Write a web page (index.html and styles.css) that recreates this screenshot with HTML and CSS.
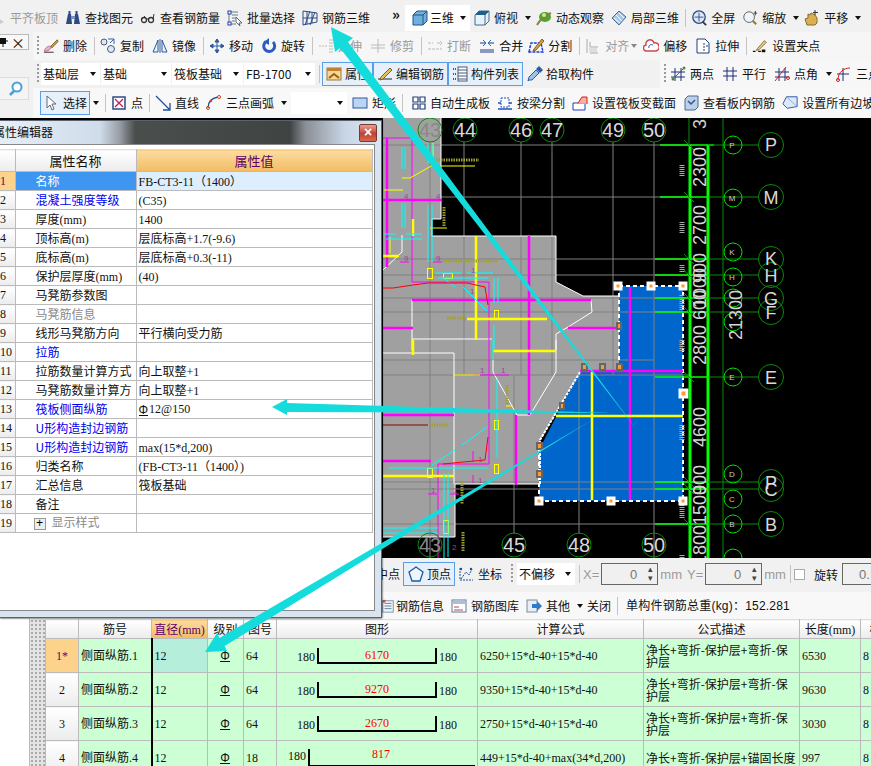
FILE: index.html
```html
<!DOCTYPE html>
<html lang="zh-CN">
<head>
<meta charset="utf-8">
<title>属性编辑器</title>
<link rel="stylesheet" href="styles.css">
</head>
<body>
<svg class="sprite" width="0" height="0">
<defs>
<symbol id="i-plate" viewBox="0 0 16 16"><path d="M2 12 8 8 14 12 8 15Z" fill="#ccc"/><path d="M8 1V7M6 5 8 8 10 5" stroke="#aaa" fill="none"/></symbol>
<symbol id="i-find" viewBox="0 0 16 16"><path d="M1 14 3 4H6L7 14ZM9 14 10 4H13L15 14Z" fill="#2c4a86"/><rect x="3.500" y="1" width="2" height="3" fill="#2c4a86"/><rect x="10.500" y="1" width="2" height="3" fill="#2c4a86"/><rect x="6" y="6" width="4" height="3" fill="#7d93bd"/></symbol>
<symbol id="i-glass" viewBox="0 0 16 16"><circle cx="4" cy="10" r="2.500" fill="none" stroke="#333" stroke-width="1.300"/><circle cx="11" cy="10" r="2.500" fill="none" stroke="#333" stroke-width="1.300"/><path d="M6 9 9 9M13 9 14 4 M2 9 5 6" stroke="#333" fill="none"/></symbol>
<symbol id="i-batch" viewBox="0 0 16 16"><path d="M2 2H11M2 2V14H9M5 5H11M5 8H9M5 11H8" stroke="#6a7894" fill="none"/><rect x="1" y="12" width="3" height="3" fill="#fff" stroke="#1f3fa0"/><rect x="1" y="1" width="3" height="3" fill="#fff" stroke="#1f3fa0"/><path d="M9 7 15 13 12 13 13 16 9 12Z" fill="#fff" stroke="#667"/></symbol>
<symbol id="i-grid3d" viewBox="0 0 16 16"><path d="M1 1V15L15 12V3ZM5 2V14M10 2.500V13M1 8H15M3 15 8 1M8 15 13 2" stroke="#2c4a86" fill="none"/></symbol>
<symbol id="i-cube" viewBox="0 0 16 16"><path d="M1 5 5 1H15V11L11 15H1Z" fill="#6fb0e0" stroke="#29527a"/><path d="M1 5H11V15M11 5 15 1" fill="none" stroke="#29527a"/></symbol>
<symbol id="i-cube2" viewBox="0 0 16 16"><path d="M1 5 5 1H15V11L11 15H1Z" fill="#e6f2fa" stroke="#3e6d93"/><path d="M1 5 5 1H15L11 5Z" fill="#1f5f8f"/><path d="M11 5V15M11 5 15 1" fill="none" stroke="#3e6d93"/></symbol>
<symbol id="i-orbit" viewBox="0 0 16 16"><ellipse cx="9" cy="7" rx="6" ry="5" fill="#5aa02c"/><path d="M1 15C3 11 9 5 15 3" stroke="#7a8a3a" stroke-width="2" fill="none"/><circle cx="8" cy="5" r="2" fill="#cfe89a"/></symbol>
<symbol id="i-partial" viewBox="0 0 16 16"><path d="M1 8 8 1 15 7 8 15Z" fill="#a8c8e8" stroke="#4a6a90"/><path d="M5 5 11 11M8 3 13 8M3 8 9 13" stroke="#fff"/></symbol>
<symbol id="i-fit" viewBox="0 0 18 18"><circle cx="9" cy="8" r="7" fill="#dce8f5" stroke="#2c4a86" stroke-width="1.500"/><path d="M9 3V13M4 8H14" stroke="#2c4a86"/><path d="M13 13 17 17" stroke="#334" stroke-width="2"/></symbol>
<symbol id="i-zoom" viewBox="0 0 18 18"><circle cx="8" cy="8" r="6" fill="#eef4fa" stroke="#555"/><path d="M12 12 16 16" stroke="#a08030" stroke-width="2.500"/><path d="M15 1V6M13 3.500H17" stroke="#333"/></symbol>
<symbol id="i-pan" viewBox="0 0 16 16"><path d="M3 15 1 9 4 8V4L6 5 7 3 9 4 11 5 13 8V13L11 15Z" fill="#dcb050" stroke="#8a6a20"/><path d="M11 0V5M9 2.500H14" stroke="#333"/></symbol>
<symbol id="i-del" viewBox="0 0 18 16"><path d="M1 15H12" stroke="#222"/><path d="M2 12C4 9 7 7 9 9 9 12 5 14 2 14Z" fill="#f0b0c8" stroke="#b06080"/><path d="M9 8 16 1 17 3 10 10Z" fill="#c9a040" stroke="#806020"/></symbol>
<symbol id="i-copy" viewBox="0 0 16 16"><circle cx="4" cy="4" r="3" fill="#dde8f0" stroke="#4a5a78"/><circle cx="11" cy="11" r="3.500" fill="#dde8f0" stroke="#4a5a78"/><path d="M8 1 14 1M14 1V6M14 1 10 5" stroke="#3a62a8" fill="none"/></symbol>
<symbol id="i-mirror" viewBox="0 0 16 16"><path d="M1 14 6 2V14ZM15 14 10 2V14Z" fill="#e8f0fa" stroke="#2c5aa0"/><path d="M8 1V15" stroke="#2c5aa0"/></symbol>
<symbol id="i-move" viewBox="0 0 16 16"><path d="M8 1V15M1 8H15M8 1 6 4H10ZM8 15 6 12H10ZM1 8 4 6V10ZM15 8 12 6V10Z" fill="#2c5aa0" stroke="#2c5aa0"/></symbol>
<symbol id="i-rotate" viewBox="0 0 16 16"><path d="M12 4A5.500 5.500 0 1 1 5 3.500" fill="none" stroke="#2c5ac0" stroke-width="3"/><path d="M8 0 3 4 8 7Z" fill="#2c5ac0"/></symbol>
<symbol id="i-extend" viewBox="0 0 16 16"><path d="M1 8H9M12 1V15M14 1V15" stroke="#bbb" stroke-dasharray="2 1" fill="none"/></symbol>
<symbol id="i-trim" viewBox="0 0 16 16"><path d="M8 1V15M1 7H15M1 10H15" stroke="#bbb" fill="none"/></symbol>
<symbol id="i-break" viewBox="0 0 16 16"><path d="M1 5H6M10 5H15M1 11H15" stroke="#bbb" stroke-dasharray="3 1" fill="none"/><path d="M13 3 15 5 13 7" stroke="#bbb" fill="none"/></symbol>
<symbol id="i-merge" viewBox="0 0 16 16"><path d="M1 12H15M1 14H15M1 5H6M10 5H15" stroke="#1f3f88" fill="none"/><path d="M4 2 7 5 4 8M12 2 9 5 12 8" stroke="#2c6ac0" fill="none"/></symbol>
<symbol id="i-split" viewBox="0 0 16 16"><path d="M1 14 3 5H13L15 14Z" fill="none" stroke="#1f3fd0" stroke-width="1.500" stroke-dasharray="3 1"/><path d="M6 11 14 1 16 3 8 12 5 13Z" fill="#d8a040" stroke="#806020"/></symbol>
<symbol id="i-align" viewBox="0 0 16 16"><path d="M2 1V15M5 15H13M5 9H13M5 9V4" stroke="#aaa" fill="none"/><rect x="4" y="10" width="8" height="4" fill="#ddd"/></symbol>
<symbol id="i-offset" viewBox="0 0 16 16"><path d="M4 13A3 3 0 0 1 3 7 4 4 0 0 1 11 5 4 4 0 0 1 13 13Z" fill="#fff" stroke="#d04a4a" stroke-width="1.500"/><path d="M6 10A2 2 0 0 1 6 8 3 3 0 0 1 10 7" stroke="#3060c0" fill="none"/></symbol>
<symbol id="i-stretch" viewBox="0 0 16 16"><path d="M2 1H10L14 5V15H2Z" fill="#fff" stroke="#1f3f78"/><path d="M9 5V14M11 8H14" stroke="#1f3f78" stroke-dasharray="2 1"/></symbol>
<symbol id="i-grippt" viewBox="0 0 18 16"><path d="M1 14H4M7 14H10" stroke="#111" stroke-width="1.500"/><rect x="11" y="12" width="4" height="3" fill="#111"/><path d="M6 11 14 2 16 4 8 12 5 13Z" fill="#e8d090" stroke="#806020"/></symbol>
<symbol id="i-prop" viewBox="0 0 16 16"><rect x="1" y="2" width="14" height="12" fill="#f4d890" stroke="#a07830"/><rect x="1" y="2" width="14" height="3" fill="#c08030"/><path d="M3 12 8 8 13 12" stroke="#a05a20" stroke-width="2" fill="none"/></symbol>
<symbol id="i-edit" viewBox="0 0 16 16"><path d="M1 13H15" stroke="#222"/><path d="M4 11 13 2 15 4 6 13 3 14Z" fill="#e8c060" stroke="#806020"/></symbol>
<symbol id="i-list" viewBox="0 0 16 16"><path d="M1 3H4M1 8H4M1 13H4" stroke="#555" stroke-width="2" stroke-dasharray="1 1"/><rect x="6" y="1" width="9" height="14" fill="#fff" stroke="#4a5a78"/><path d="M6 4H15M6 7H15M6 10H15M6 13H15" stroke="#4a5a78"/></symbol>
<symbol id="i-pick" viewBox="0 0 16 16"><path d="M2 14 1 15 2 11 9 4 12 7 5 14Z" fill="#9cc4ea" stroke="#2c5aa0"/><path d="M9 3 12 0 16 4 13 7Z" fill="#2c5aa0"/></symbol>
<symbol id="i-two" viewBox="0 0 16 16"><path d="M5 2V15M11 2V15M1 6H15M1 11H15" stroke="#1f2f78" fill="none"/><path d="M2 14 15 1" stroke="#c03030"/><circle cx="3" cy="13" r="1.500" fill="#4a8a2a"/><circle cx="14" cy="2" r="1.500" fill="#4a8a2a"/></symbol>
<symbol id="i-par" viewBox="0 0 16 16"><path d="M5 1V15M11 1V15M1 5H15M1 10H15" stroke="#1f2f78" fill="none"/></symbol>
<symbol id="i-ang" viewBox="0 0 16 16"><path d="M5 2V15M11 2V15M1 6H15M1 11H15" stroke="#1f2f78" fill="none"/><path d="M1 15 12 1" stroke="#d02020"/><circle cx="14" cy="12" r="1.500" fill="none" stroke="#d02020"/></symbol>
<symbol id="i-arc3v" viewBox="0 0 16 16"><path d="M7 2V15M1 8H13" stroke="#1f2f78" fill="none"/><path d="M2 14C2 6 8 2 14 2" stroke="#d02020" fill="none"/><circle cx="2" cy="14" r="1.500" fill="none" stroke="#d02020"/></symbol>
<symbol id="i-arrow" viewBox="0 0 16 16"><path d="M3 1V13L6 10 8 15 10 14 8 9H12Z" fill="#fff" stroke="#667"/></symbol>
<symbol id="i-point" viewBox="0 0 16 16"><rect x="2" y="2" width="12" height="12" fill="#fff" stroke="#2c4a86" stroke-width="1.500"/><path d="M4 4 12 12M12 4 4 12" stroke="#c02050" stroke-width="1.300"/></symbol>
<symbol id="i-line" viewBox="0 0 16 16"><path d="M1 1 15 15M15 8V15H8" stroke="#1f4f98" fill="none" stroke-width="1.300"/></symbol>
<symbol id="i-arc" viewBox="0 0 16 16"><path d="M2 13C2 7 6 3 12 2" stroke="#1f4f98" fill="none" stroke-width="1.300"/><circle cx="2" cy="13" r="1.500" fill="none" stroke="#d04020"/><circle cx="13" cy="2" r="1.500" fill="none" stroke="#d04020"/><circle cx="5" cy="6" r="1.200" fill="#d04020"/></symbol>
<symbol id="i-rect" viewBox="0 0 16 16"><rect x="1" y="3" width="14" height="10" fill="#bcd4f4" stroke="#2c5aa0"/></symbol>
<symbol id="i-auto" viewBox="0 0 16 16"><path d="M2 2H7V7H2ZM9 2H14V7H9ZM2 9H7V14H2ZM9 9H14V14H9Z" fill="#fff" stroke="#1f3f78" stroke-width="1.200"/></symbol>
<symbol id="i-beam" viewBox="0 0 16 16"><path d="M1 8H15M1 14H15" stroke="#1f4fc0" stroke-width="1.300"/><rect x="4" y="3" width="8" height="9" fill="#fff" stroke="#1f4fc0" stroke-dasharray="2 1"/></symbol>
<symbol id="i-var" viewBox="0 0 16 16"><path d="M1 8H13V15H1Z" fill="#fff" stroke="#1f3fc0"/><path d="M6 8 10 2H15V9" fill="#f4b0a0" stroke="#d02020"/></symbol>
<symbol id="i-view" viewBox="0 0 16 16"><path d="M2 4 5 1H15V12L12 15H2Z" fill="#bcd0e8" stroke="#4a6a90"/><path d="M5 6 8 9 12 5" stroke="#2c5a90" stroke-width="1.500" fill="none"/></symbol>
<symbol id="i-slope" viewBox="0 0 18 16"><path d="M1 9 5 1H17V12L6 14Z" fill="#dce8f8" stroke="#1f4fa0"/><path d="M6 2 16 11" stroke="#6a8ac0" stroke-dasharray="2 1"/></symbol>
<symbol id="i-vertex" viewBox="0 0 16 16"><path d="M8 1 15 6 12 15H4L1 6Z" fill="#eef6fc" stroke="#1f5aa0" stroke-width="1.300"/></symbol>
<symbol id="i-coord" viewBox="0 0 16 16"><path d="M2 2V14H15M3 13 8 6 11 9 14 3" stroke="#1f4f98" fill="none" stroke-dasharray="2 1"/><circle cx="3" cy="3" r="1.200" fill="#1f4f98"/><circle cx="13" cy="3" r="1.200" fill="#1f4f98"/></symbol>
<symbol id="i-lib" viewBox="0 0 16 16"><rect x="1" y="2" width="14" height="12" fill="#fff" stroke="#5a7a9a"/><rect x="2" y="3" width="12" height="3" fill="#a8c0dc"/><path d="M3 9H8M3 12H12" stroke="#b05050"/></symbol>
<symbol id="i-info" viewBox="0 0 16 16"><rect x="2" y="2" width="12" height="13" fill="#eef4fa" stroke="#6a8aa8"/><path d="M4 5H12M4 8H12M4 11H12" stroke="#5a7a9a"/><rect x="2" y="1" width="3" height="3" fill="#c05040"/></symbol>
<symbol id="i-other" viewBox="0 0 16 16"><rect x="1" y="2" width="10" height="12" fill="#e8eef6" stroke="#7a8aa0"/><path d="M6 6H11V3L16 8 11 13V10H6Z" fill="#2c7ad0"/></symbol>
<symbol id="i-search" viewBox="0 0 16 16"><circle cx="9" cy="6" r="4.500" fill="#fff" stroke="#4aa0d8" stroke-width="2"/><path d="M6 10 2 14" stroke="#4aa0d8" stroke-width="2.500"/></symbol>
<symbol id="i-pin" viewBox="0 0 8 10"><path d="M0 1H6V7H0Z" fill="#111"/><path d="M6 4H8" stroke="#111"/><path d="M3 7V10" stroke="#111"/></symbol>
</defs>
</svg>

<div class="app">
  <div class="row top">
    <span class="tool off first"><svg class="ic"><use href="#i-plate"/></svg>平齐板顶</span>
    <span class="tool"><svg class="ic"><use href="#i-find"/></svg>查找图元</span>
    <span class="tool"><svg class="ic"><use href="#i-glass"/></svg>查看钢筋量</span>
    <span class="tool"><svg class="ic"><use href="#i-batch"/></svg>批量选择</span>
    <span class="tool"><svg class="ic"><use href="#i-grid3d"/></svg>钢筋三维</span>
    <span class="chev">»</span>
    <span class="white-group">
      <span class="tool"><svg class="ic"><use href="#i-cube"/></svg>三维</span><span class="caret"></span>
    </span>
    <span class="tool"><svg class="ic"><use href="#i-cube2"/></svg>俯视</span><span class="caret"></span>
    <span class="tool"><svg class="ic"><use href="#i-orbit"/></svg>动态观察</span>
    <span class="tool"><svg class="ic"><use href="#i-partial"/></svg>局部三维</span>
    <span class="sep"></span>
    <span class="tool"><svg class="ic"><use href="#i-fit"/></svg>全屏</span>
    <span class="tool"><svg class="ic"><use href="#i-zoom"/></svg>缩放</span><span class="caret"></span>
    <span class="tool"><svg class="ic"><use href="#i-pan"/></svg>平移</span><span class="caret"></span>
  </div>

  <div class="upper">
    <div class="dock">
      <div class="dock-title"><svg class="pin"><use href="#i-pin"/></svg><span class="close-x">×</span></div>
      <div class="dock-search"><svg class="ic"><use href="#i-search"/></svg></div>
    </div>
    <div class="rows">
      <div class="row r2">
        <span class="grip"></span>
        <span class="tool"><svg class="ic"><use href="#i-del"/></svg>删除</span>
        <span class="sep"></span>
        <span class="tool"><svg class="ic"><use href="#i-copy"/></svg>复制</span>
        <span class="tool"><svg class="ic"><use href="#i-mirror"/></svg>镜像</span>
        <span class="sep"></span>
        <span class="tool"><svg class="ic"><use href="#i-move"/></svg>移动</span>
        <span class="tool"><svg class="ic"><use href="#i-rotate"/></svg>旋转</span>
        <span class="sep"></span>
        <span class="tool off"><svg class="ic"><use href="#i-extend"/></svg>延伸</span>
        <span class="tool off"><svg class="ic"><use href="#i-trim"/></svg>修剪</span>
        <span class="sep"></span>
        <span class="tool off"><svg class="ic"><use href="#i-break"/></svg>打断</span>
        <span class="tool"><svg class="ic"><use href="#i-merge"/></svg>合并</span>
        <span class="tool tight"><svg class="ic"><use href="#i-split"/></svg>分割</span>
        <span class="sep"></span>
        <span class="tool off"><svg class="ic"><use href="#i-align"/></svg>对齐</span><span class="caret gray"></span>
        <span class="tool"><svg class="ic"><use href="#i-offset"/></svg>偏移</span>
        <span class="tool"><svg class="ic"><use href="#i-stretch"/></svg>拉伸</span>
        <span class="sep"></span>
        <span class="tool"><svg class="ic"><use href="#i-grippt"/></svg>设置夹点</span>
      </div>
      <div class="row r3">
        <span class="grip"></span>
        <span class="combo c59">基础层<span class="caret"></span></span>
        <span class="combo c70">基础<span class="caret"></span></span>
        <span class="combo c71">筏板基础<span class="caret"></span></span>
        <span class="combo c71">FB-1700<span class="caret"></span></span>
        <span class="sep"></span>
        <span class="toggle"><svg class="ic"><use href="#i-prop"/></svg>属性</span>
        <span class="toggle"><svg class="ic"><use href="#i-edit"/></svg>编辑钢筋</span>
        <span class="toggle"><svg class="ic"><use href="#i-list"/></svg>构件列表</span>
        <span class="tool pick"><svg class="ic"><use href="#i-pick"/></svg>拾取构件</span>
        <span class="group-right">
          <span class="grip"></span>
          <span class="tool"><svg class="ic"><use href="#i-two"/></svg>两点</span>
          <span class="tool"><svg class="ic"><use href="#i-par"/></svg>平行</span>
          <span class="tool"><svg class="ic"><use href="#i-ang"/></svg>点角</span><span class="caret"></span>
          <span class="tool"><svg class="ic"><use href="#i-arc3v"/></svg>三点</span>
        </span>
      </div>
      <div class="row r4">
        <span class="toggle sel"><svg class="ic"><use href="#i-arrow"/></svg>选择</span><span class="caret"></span>
        <span class="sep"></span>
        <span class="tool"><svg class="ic"><use href="#i-point"/></svg>点</span>
        <span class="sep"></span>
        <span class="tool"><svg class="ic"><use href="#i-line"/></svg>直线</span>
        <span class="tool"><svg class="ic"><use href="#i-arc"/></svg>三点画弧</span><span class="caret"></span>
        <span class="combo c55"><span class="caret"></span></span>
        <span class="tool"><svg class="ic"><use href="#i-rect"/></svg>矩形</span>
        <span class="sep wide"></span>
        <span class="tool narrow"><svg class="ic"><use href="#i-auto"/></svg>自动生成板</span>
        <span class="tool"><svg class="ic"><use href="#i-beam"/></svg>按梁分割</span>
        <span class="tool"><svg class="ic"><use href="#i-var"/></svg>设置筏板变截面</span>
        <span class="tool"><svg class="ic"><use href="#i-view"/></svg>查看板内钢筋</span>
        <span class="tool"><svg class="ic"><use href="#i-slope"/></svg>设置所有边坡</span>
      </div>
    </div>
  </div>

  <svg class="cad" viewBox="0 118 871 440" width="871" height="440">
    <rect x="0" y="118" width="871" height="440" fill="#000"/>
    <path d="M383 118H441V219H432V236H556V282L583 296H619V372H580L540 440V484H455V537H383Z" fill="#a0a0a0"/>
    <path d="M619 286H683V501H539V450L579 372H619Z" fill="#0066cc"/>
    <g stroke="#808080" fill="none">
      <path d="M383 145H690M441 197H690M383 259H690M383 275H690M383 298H690M383 312H690M383 360H654M383 375H690M383 482H690M383 489H690M383 524H690"/>
      <path d="M430 142V558M464 142V375M521 142V375M552 142V375M613 142V375M654 142V558M514 375V534M579 375V534"/>
    </g>
    <g stroke="#fff" fill="none">
      <path d="M441 118V219H432V236H556V282L583 296H619M455 484H540M455 484V537H383"/>
      <path d="M412 300V350M383 353H454V484M412 339H492M556 350V334L568 327 592 312 591 300M556 340V372L530 415H517L493 372V360M383 270 402 252V235"/>
      <path d="M580 372 540 440V484" stroke-dasharray="3 1" stroke-width="2"/>
    </g>
    <path d="M619 286H683V501H539M539 501V450M619 286V360" fill="none" stroke="#fff" stroke-width="2" stroke-dasharray="4 3"/>
    <g stroke="#ff00ff" stroke-width="2.500" fill="none">
      <path d="M383 200H442M387 138V267M529 236V415M412 300H591M383 328H413M568 328H618M383 415H454M516 415V485M383 461H431M580 371H683M630 287V500"/>
    </g>
    <g stroke="#ff00ff" fill="none">
      <path d="M383 138H412V282H489V464H438V558M400 262H409M433 262H442M473 375H509M428 494H437M450 494H459M473 451V462M473 475V483"/>
    </g>
    <g stroke="#ffff00" stroke-width="2.500" fill="none">
      <path d="M476 236V340M467 319H547M413 219V236M413 340V355M493 351H556M383 476H454M556 416H683M592 372V500M383 256H399"/>
    </g>
    <g stroke="#ffff00" fill="none">
      <path d="M384 190H403M440 166H475M430 228H447M402 178H410L433 165V143M390 237V253M453 375H480M506 406H513"/>
      <rect x="427.500" y="268.500" width="5" height="10"/><rect x="443.500" y="273.500" width="9" height="5"/><rect x="494.500" y="310.500" width="4" height="9"/><rect x="494.500" y="420.500" width="4" height="9"/><rect x="494.500" y="464.500" width="4" height="9"/><rect x="427.500" y="468.500" width="5" height="9"/><rect x="443.500" y="520.500" width="5" height="13"/>
    </g>
    <g stroke="#00ffff" fill="none">
      <path d="M402 147V169M405 147V169M402 203V228M405 203V228M428 143V163M432 143V163M428 205V262M432 205V262M383 234H396M406 234H422M386 239H422M435 273H462M467 273H493M438 278H488M443 278 455 287M463 287 487 311M494 278V303M498 278V303M494 325V350M493 340V360M497 380V457M462 445 487 427M432 465 455 450M389 468H488M383 528H438M383 533H438M444 473V558M448 473V557"/>
    </g>
    <g fill="none">
      <path d="M383 288H393L413 285 428 283H467L485 287 488 305" stroke="#ff0000"/>
      <path d="M488 437 485 460 463 462 443 464" stroke="#ff0000"/>
      <path d="M383 425H428" stroke="#8a0000"/>
    </g>
    <g stroke="#a0a030" stroke-dasharray="1.500 1" stroke-width="3" fill="none">
      <path d="M436 160H479M443 261H497M447 318H467M429 425H448"/>
      <path d="M444 207V226M507 385V405M462 482V504M463 532V552"/>
    </g>
    <g stroke="#aaa" stroke-dasharray="1 1" stroke-width="5" fill="none">
      <path d="M682 165V176M682 222V234M682 265V272M682 295V310M682 340V352M682 425V440M682 505V518M682 555V558"/>
    </g>
    <g class="tiny">
      <text x="480" y="373">1</text><text x="501" y="373">1</text><text x="478" y="462">1</text><text x="478" y="483">1</text><text x="431" y="493">1</text><text x="453" y="493">1</text><text x="471" y="273">1</text><text x="470" y="294">1</text><text x="404" y="261">9</text><text x="436" y="261">9</text><text x="404" y="199">4</text><text x="436" y="199">4</text><text x="452" y="550">2</text>
    </g>
    <g fill="#ff9933" stroke="#fff" stroke-width="3">
      <rect x="615" y="283" width="6" height="6"/><rect x="648" y="283" width="6" height="6"/><rect x="680" y="283" width="6" height="6"/><rect x="680" y="390" width="7" height="7"/><rect x="680" y="498" width="6" height="6"/><rect x="608" y="498" width="6" height="6"/><rect x="536" y="498" width="6" height="6"/>
    </g>
    <g fill="#ff9933" stroke="#666" stroke-width="2">
      <rect x="537" y="471" width="5" height="6"/><rect x="537" y="443" width="5" height="6"/><rect x="560" y="403" width="4" height="6"/><rect x="582" y="364" width="5" height="6"/><rect x="600" y="364" width="5" height="6"/><rect x="617" y="364" width="5" height="6"/><rect x="617" y="323" width="4" height="6"/>
    </g>
    <g fill="none" stroke="#00ff00" stroke-width="3">
      <path d="M690 145V558M708 145V558"/>
    </g>
    <g fill="none" stroke="#00ff00" stroke-width="1.500">
      <path d="M660 145H714M660 197H708M655 259H708M655 275H708M655 298H708M655 312H708M655 377H708M655 482H708M655 489H708M655 524H708"/>
    </g>
    <g fill="none" stroke="#0a8a0a">
      <path d="M689 118V145M723 118V558M708 145H759M708 197H759M708 259H759M708 275H759M708 298H759M708 312H759M708 377H759M708 482H759M708 489H759M708 524H759"/>
      <path d="M684 140 694 150M684 192 694 202M684 254 694 264M684 270 694 280M684 293 694 303M684 307 694 317M684 372 694 382M684 477 694 487M684 484 694 494M684 519 694 529"/>
    </g>
    <g fill="none" stroke="#0a8a0a">
      <circle cx="430" cy="130" r="12"/><circle cx="465" cy="130" r="12"/><circle cx="521" cy="130" r="12"/><circle cx="552" cy="130" r="12"/><circle cx="613" cy="130" r="12"/><circle cx="654" cy="130" r="12"/>
      <circle cx="430" cy="545" r="12"/><circle cx="514" cy="545" r="12"/><circle cx="579" cy="545" r="12"/><circle cx="654" cy="545" r="12"/>
      <circle cx="771" cy="145" r="12.500"/><circle cx="771" cy="197" r="12.500"/><circle cx="771" cy="259" r="12.500"/><circle cx="771" cy="275" r="12.500"/><circle cx="771" cy="298" r="12.500"/><circle cx="771" cy="312" r="12.500"/><circle cx="771" cy="377" r="12.500"/><circle cx="771" cy="482" r="12.500"/><circle cx="771" cy="489" r="12.500"/><circle cx="771" cy="524" r="12.500"/>
    </g>
    <g fill="none" stroke="#00e000">
      <circle cx="733" cy="145" r="9"/><circle cx="733" cy="198" r="9"/><circle cx="733" cy="252" r="9"/><circle cx="733" cy="277" r="9"/><circle cx="733" cy="298" r="9"/><circle cx="733" cy="322" r="9"/><circle cx="733" cy="377" r="9"/><circle cx="733" cy="474" r="9"/><circle cx="733" cy="499" r="9"/><circle cx="733" cy="524" r="9"/><circle cx="733" cy="558" r="9"/>
    </g>
    <g class="bub-num">
      <text x="430" y="137" class="dim">43</text><text x="465" y="137">44</text><text x="521" y="137">46</text><text x="552" y="137">47</text><text x="613" y="137">49</text><text x="654" y="137">50</text>
      <text x="430" y="552" class="dim">43</text><text x="514" y="552">45</text><text x="579" y="552">48</text><text x="654" y="552">50</text>
    </g>
    <g class="bub-big">
      <text x="771" y="151">P</text><text x="771" y="204">M</text><text x="771" y="265">K</text><text x="771" y="282">H</text><text x="771" y="305">G</text><text x="771" y="319">F</text><text x="771" y="384">E</text><text x="771" y="489">P</text><text x="771" y="496">C</text><text x="771" y="531">B</text>
    </g>
    <g class="bub-small">
      <text x="732" y="148">P</text><text x="732" y="201">M</text><text x="732" y="255">K</text><text x="732" y="280">H</text><text x="732" y="380">E</text><text x="732" y="477">D</text><text x="732" y="502">C</text><text x="732" y="527">B</text>
    </g>
    <g class="dims">
      <text transform="translate(706 167) rotate(-90)">2300</text>
      <text transform="translate(706 225) rotate(-90)">2700</text>
      <text transform="translate(706 268) rotate(-90)">900</text>
      <text transform="translate(706 288) rotate(-90)">1000</text>
      <text transform="translate(706 305) rotate(-90)">600</text>
      <text transform="translate(706 345) rotate(-90)">2800</text>
      <text transform="translate(706 427) rotate(-90)">4600</text>
      <text transform="translate(706 480) rotate(-90)">900</text>
      <text transform="translate(706 505) rotate(-90)">1500</text>
      <text transform="translate(706 545) rotate(-90)">1800</text>
      <text transform="translate(706 124) rotate(-90)">3</text>
      <text transform="translate(742 315) rotate(-90)">21300</text>
    </g>
  </svg>

  <div class="row r5">
    <span class="tool mid">中点</span>
    <span class="toggle vertex"><svg class="ic"><use href="#i-vertex"/></svg>顶点</span>
    <span class="tool"><svg class="ic"><use href="#i-coord"/></svg>坐标</span>
    <span class="grip"></span>
    <span class="combo c58">不偏移<span class="caret"></span></span>
    <span class="sep"></span>
    <span class="lbl off">X=</span>
    <span class="spin">0<span class="arrows"><b>&#9652;</b><b>&#9662;</b></span></span>
    <span class="lbl off">mm</span>
    <span class="lbl off yl">Y=</span>
    <span class="spin">0<span class="arrows"><b>&#9652;</b><b>&#9662;</b></span></span>
    <span class="lbl off">mm</span>
    <span class="sep sep2"></span>
    <span class="check"></span>
    <span class="lbl rot">旋转</span>
    <span class="spin last">0.</span>
  </div>

  <div class="row r6">
    <span class="tool"><svg class="ic small"><use href="#i-info"/></svg>钢筋信息</span>
    <span class="tool"><svg class="ic"><use href="#i-lib"/></svg>钢筋图库</span>
    <span class="tool"><svg class="ic"><use href="#i-other"/></svg>其他</span><span class="caret"></span>
    <span class="tool">关闭</span>
    <span class="sep"></span>
    <span class="total">单构件钢筋总重(kg)：152.281</span>
  </div>

  <div class="lower">
    <div class="lower-gap"></div>
    <div class="lower-grip"></div>
    <table class="rebar">
      <colgroup><col class="w33"><col class="w73"><col class="w56"><col class="w36"><col class="w33"><col class="w201"><col class="w166"><col class="w156"><col class="w61"><col class="w30"></colgroup>
      <thead>
        <tr><th></th><th>筋号</th><th class="hot">直径<i class="m">(mm)</i></th><th>级别</th><th>图号</th><th>图形</th><th>计算公式</th><th>公式描述</th><th>长度<i class="m">(mm)</i></th><th>根</th></tr>
      </thead>
      <tbody>
        <tr><td class="rn cur"><i class="m">1*</i></td><td>侧面纵筋<i class="m">.1</i></td><td class="ln cursel"><i class="m">12</i></td><td class="ctr"><span class="grade">Φ</span></td><td><i class="m">64</i></td>
          <td><div class="shape"><i class="m">180</i><span class="bar">6170</span><i class="m">180</i></div></td><td><i class="m">6250+15*d-40+15*d-40</i></td><td class="desc">净长+弯折-保护层+弯折-保护层</td><td><i class="m">6530</i></td><td><i class="m">8</i></td></tr>
        <tr><td class="rn"><i class="m">2</i></td><td>侧面纵筋<i class="m">.2</i></td><td class="ln"><i class="m">12</i></td><td class="ctr"><span class="grade">Φ</span></td><td><i class="m">64</i></td>
          <td><div class="shape"><i class="m">180</i><span class="bar">9270</span><i class="m">180</i></div></td><td><i class="m">9350+15*d-40+15*d-40</i></td><td class="desc">净长+弯折-保护层+弯折-保护层</td><td><i class="m">9630</i></td><td><i class="m">8</i></td></tr>
        <tr><td class="rn"><i class="m">3</i></td><td>侧面纵筋<i class="m">.3</i></td><td class="ln"><i class="m">12</i></td><td class="ctr"><span class="grade">Φ</span></td><td><i class="m">64</i></td>
          <td><div class="shape"><i class="m">180</i><span class="bar">2670</span><i class="m">180</i></div></td><td><i class="m">2750+15*d-40+15*d-40</i></td><td class="desc">净长+弯折-保护层+弯折-保护层</td><td><i class="m">3030</i></td><td><i class="m">8</i></td></tr>
        <tr><td class="rn"><i class="m">4</i></td><td>侧面纵筋<i class="m">.4</i></td><td class="ln"><i class="m">12</i></td><td class="ctr"><span class="grade">Φ</span></td><td><i class="m">18</i></td>
          <td><div class="shape wide"><i class="m">180</i><span class="bar open">817</span></div></td><td><i class="m">449+15*d-40+max(34*d,200)</i></td><td class="desc">净长+弯折-保护层+锚固长度</td><td><i class="m">997</i></td><td><i class="m">8</i></td></tr>
      </tbody>
    </table>
  </div>

  <div class="dialog">
    <div class="titlebar">
      <span class="title">属性编辑器</span>
      <span class="winclose">×</span>
    </div>
    <div class="dialog-body">
      <table class="props">
        <colgroup><col class="p1"><col class="p2"><col class="p3"></colgroup>
        <thead><tr><th></th><th>属性名称</th><th class="hot">属性值</th></tr></thead>
        <tbody>
          <tr><td class="rn cur">1</td><td class="nm active">名称</td><td class="val activeval"><i class="m">FB-CT3-11（1400）</i></td></tr>
          <tr><td class="rn">2</td><td class="nm link">混凝土强度等级</td><td class="val"><i class="m">(C35)</i></td></tr>
          <tr><td class="rn">3</td><td class="nm">厚度<i class="m">(mm)</i></td><td class="val"><i class="m">1400</i></td></tr>
          <tr><td class="rn">4</td><td class="nm">顶标高<i class="m">(m)</i></td><td class="val">层底标高<i class="m">+1.7(-9.6)</i></td></tr>
          <tr><td class="rn">5</td><td class="nm">底标高<i class="m">(m)</i></td><td class="val">层底标高<i class="m">+0.3(-11)</i></td></tr>
          <tr><td class="rn">6</td><td class="nm">保护层厚度<i class="m">(mm)</i></td><td class="val"><i class="m">(40)</i></td></tr>
          <tr><td class="rn">7</td><td class="nm">马凳筋参数图</td><td class="val"></td></tr>
          <tr><td class="rn">8</td><td class="nm dim">马凳筋信息</td><td class="val"></td></tr>
          <tr><td class="rn">9</td><td class="nm">线形马凳筋方向</td><td class="val">平行横向受力筋</td></tr>
          <tr><td class="rn">10</td><td class="nm link">拉筋</td><td class="val"></td></tr>
          <tr><td class="rn">11</td><td class="nm">拉筋数量计算方式</td><td class="val">向上取整<i class="m">+1</i></td></tr>
          <tr><td class="rn">12</td><td class="nm">马凳筋数量计算方</td><td class="val">向上取整<i class="m">+1</i></td></tr>
          <tr><td class="rn">13</td><td class="nm link">筏板侧面纵筋</td><td class="val"><span class="grade">Φ</span><i class="m">12@150</i></td></tr>
          <tr><td class="rn">14</td><td class="nm link">U形构造封边钢筋</td><td class="val"></td></tr>
          <tr><td class="rn">15</td><td class="nm link">U形构造封边钢筋</td><td class="val"><i class="m">max(15*d,200)</i></td></tr>
          <tr><td class="rn">16</td><td class="nm">归类名称</td><td class="val"><i class="m">(FB-CT3-11（1400）)</i></td></tr>
          <tr><td class="rn">17</td><td class="nm">汇总信息</td><td class="val">筏板基础</td></tr>
          <tr><td class="rn">18</td><td class="nm">备注</td><td class="val"></td></tr>
          <tr><td class="rn">19</td><td class="nm dim"><span class="plus">+</span>显示样式</td><td class="val"></td></tr>
        </tbody>
      </table>
    </div>
  </div>

  <svg class="arrows-layer" viewBox="0 0 871 766" width="871" height="766">
    <polygon points="331,27 353,38 348,42 637,430 340,48 335,52"/>
    <polygon points="272,407 287,399 287,403 613,413 287,412 287,415"/>
    <polygon points="205,652 217,633 219.500,638 592,420 224.600,646 227,651"/>
  </svg>
</div>
</body>
</html>
```

FILE: styles.css
```css
* { box-sizing: border-box; }
html, body { margin: 0; padding: 0; }
body {
  width: 871px;
  height: 766px;
  overflow: hidden;
  background: #fff;
  font: 12px/1 "Noto Sans CJK SC", "Liberation Sans", sans-serif;
  color: #111;
}
.sprite { position: absolute; }
.app { position: relative; width: 871px; height: 766px; overflow: hidden; display: flex; flex-direction: column; }

/* toolbars */
.row { display: flex; align-items: center; white-space: nowrap; background: #f1f1f1; overflow: hidden; flex: none; }
.top { height: 32px; padding-top: 3px; }
.upper { display: flex; height: 86px; flex: none; }
.rows { width: 838px; display: flex; flex-direction: column; }
.r2 { height: 28px; padding-left: 3px; background: #f6f6f6; }
.r3 { height: 28px; padding-left: 3px; }
.r4 { height: 30px; padding-left: 7px; background: #f8f8f8; }
.tool { display: inline-flex; align-items: center; gap: 4px; margin-right: 8px; flex: none; }
.tool.tight { margin-left: -3px; }
.tool.first { margin-left: -10px; margin-right: 7px; }
.off { color: #9a9a9a; }
.ic { width: 16px; height: 16px; flex: none; }
.sep { width: 1px; height: 18px; background: #c4c4c4; margin: 0 5px 0 -1px; flex: none; }
.grip { width: 2px; height: 20px; margin: 0 4px 0 1px; flex: none; background: repeating-linear-gradient(#999 0 2px, transparent 2px 4px); }
.caret { width: 0; height: 0; border: 3.500px solid transparent; border-top: 4px solid #111; border-bottom: 0; margin-right: 4px; flex: none; }
.caret.gray { border-top-color: #888; margin: 0 6px 0 -6px; }
.top .tool { margin-right: 7px; }
.top .caret { margin-right: 5px; }
.chev { margin: -8px 5px 0 15px; font-size: 15px; font-weight: bold; width: 8px; line-height: 12px; }
.white-group { display: inline-flex; align-items: center; background: #fff; height: 26px; width: 65px; padding-left: 7px; margin-right: 4px; flex: none; }
.top .white-group .tool { margin-right: 6px; gap: 2px; }
.top .white-group .caret { margin: 0; }

.combo { display: inline-flex; align-items: center; justify-content: space-between; height: 22px; padding: 0 4px 0 2px; background: #fff; margin-right: 1px; flex: none; }
.c59 { width: 59px; }
.c70 { width: 70px; }
.c71 { width: 71px; }
.c55 { width: 56px; margin: 0 5px 0 0; justify-content: flex-end; }
.c58 { width: 58px; margin-right: 2px; }
.combo .caret { margin: 0; }
.toggle { display: inline-flex; align-items: center; gap: 3px; height: 24px; padding: 0 3px; border: 1px solid #5a9ee8; background: #e6f0fa; flex: none; }
.r3 > .grip { margin-right: 2px; }
.r3 > .sep { margin: 0 2px 0 3px; }
.pick { margin-left: 4px; gap: 3px; }
.group-right { display: inline-flex; align-items: center; margin-left: 58px; background: #f7f7f7; height: 28px; padding-left: 3px; flex: none; }
.r4 .tool { margin-right: 7px; }
.r4 .tool.narrow { gap: 3px; }
.r4 .sep.wide { margin-right: 8px; }
.r4 .sel { width: 50px; padding: 0 0 0 3px; margin-right: 3px; gap: 3px; }
.r4 .sel + .caret { margin-right: 7px; }

/* left dock */
.dock { width: 33px; flex: none; background: #f1f1f1; display: flex; flex-direction: column; }
.dock-title { width: 29px; height: 16px; margin-top: 2px; background: #f8f8f8; border: 1px solid #bbb; border-left: 0; display: flex; align-items: center; justify-content: space-between; padding: 0 3px 0 0; }
.close-x { font-size: 14px; }
.pin { width: 8px; height: 10px; }
.dock-search { width: 29px; height: 23px; margin-top: 27px; background: #f4f4f4; border: 1px solid #ddd; border-left: 0; display: flex; align-items: center; justify-content: flex-end; padding-right: 4px; }

/* CAD canvas */
.cad { display: block; flex: none; }
.tiny text { font: 8px "Liberation Sans", sans-serif; fill: #a040a0; }
.bub-num text { font: 20px "Liberation Sans", sans-serif; fill: #d8d8d8; text-anchor: middle; }
.bub-num text.dim { fill: #888; }
.bub-big text { font: 18px "Liberation Sans", sans-serif; fill: #d8d8d8; text-anchor: middle; }
.bub-small text { font: 8px "Liberation Sans", sans-serif; fill: #ccc; text-anchor: middle; }
.dims text { font: 18px "Liberation Sans", sans-serif; fill: #d4d4d4; text-anchor: middle; }

/* status rows */
.r5 { height: 34px; padding: 0 0 2px 383px; background: #f1f1f1; }
.r5 .tool { margin-right: 8px; }
.r5 .mid { margin-left: -7px; margin-right: 3px; }
.r5 .vertex { width: 52px; padding-left: 4px; margin-right: 3px; height: 24px; }
.r5 .grip { margin: 0 4px 0 1px; }
.r5 .sep { margin: 0 3px 0 2px; }
.r5 .sep.sep2 { margin-left: 4px; }
.lbl { flex: none; font-size: 13px; font-family: "Liberation Sans", sans-serif; }
.lbl.yl { margin-left: 5px; }
.lbl.rot { margin-left: 9px; font: 12px "Noto Sans CJK SC", sans-serif; }
.spin { position: relative; display: inline-flex; align-items: center; justify-content: flex-end; width: 57px; height: 22px; margin: 0 2px; padding-right: 20px; border: 1px solid #666; background: #f0f0f0; color: #777; font-size: 13px; flex: none; font-family: "Liberation Sans", sans-serif; }
.spin.last { width: 40px; margin-left: 4px; justify-content: flex-start; padding: 0 0 0 16px; }
.arrows { position: absolute; right: 4px; top: 1px; display: flex; flex-direction: column; font-size: 9px; line-height: 9px; color: #444; }
.arrows b { font-weight: normal; }
.check { width: 11px; height: 11px; border: 1px solid #aaa; background: #fff; flex: none; }
.r6 { height: 27px; padding-left: 381px; background: #f8f8f8; }
.r6 .tool { margin-right: 7px; }
.r6 .ic.small { width: 14px; margin-right: -3px; }
.total { font-family: "Liberation Sans", "Noto Sans CJK SC", sans-serif; font-size: 12px; letter-spacing: 0.200px; margin-left: 3px; }

/* lower table */
.lower { display: flex; height: 150px; flex: none; overflow: hidden; }
.lower-gap { width: 29px; flex: none; background: #fff; }
.lower-grip { width: 16px; flex: none; background: #e4e4e4 radial-gradient(#aaa 1px, transparent 1.500px) 0 0 / 4px 4px; border-left: 1px solid #bbb; }
.w33 { width: 33px; } .w73 { width: 73px; } .w56 { width: 56px; } .w36 { width: 36px; } .w201 { width: 201px; } .w166 { width: 166px; } .w156 { width: 156px; } .w61 { width: 61px; } .w30 { width: 30px; }
table { border-collapse: collapse; table-layout: fixed; flex: none; }
.m { font: 12px/1 "Liberation Serif", serif; font-style: normal; }
.rebar { width: 845px; }
.rebar th { height: 19px; font-weight: normal; font-size: 12px; border: 1px solid #bbb; border-top: 1px solid #ddd; background: linear-gradient(#fff, #ececec); padding: 0; }
.rebar td { height: 34px; padding: 0 2px; background: #ccffd4; border: 1px solid #bbb; overflow: hidden; white-space: nowrap; }
.hot { background: linear-gradient(#fcdca0, #f2bd63) !important; color: #60006a; font-weight: normal; }
.rebar td.rn { background: linear-gradient(#fff, #ececec); text-align: center; }
.rebar td.cur, .props td.cur { background: #fdd28a; color: #60006a; }
.rebar td.ln { border-left: 2px solid #000; }
.rebar td.cursel { background: #b5efdc; }
.rebar td.ctr { text-align: center; }
.rebar td.desc { white-space: normal; line-height: 12px; font-size: 12px; }
.grade { display: inline-block; font: 12px/10px "Liberation Sans", sans-serif; border-bottom: 1px solid #111; height: 11px; margin-right: 1px; vertical-align: middle; }
.shape { display: flex; align-items: flex-end; justify-content: flex-start; padding-left: 18px; gap: 2px; height: 17px; }
.shape .m { line-height: 14px; }
.bar { display: block; width: 120px; height: 16px; border: solid #000; border-width: 0 2px 2px; color: #f00; text-align: center; font: 12px/14px "Liberation Serif", serif; }
.shape.wide { padding-left: 9px; align-items: flex-start; }
.bar.open { width: 200px; border-right: 0; height: 18px; line-height: 10px; text-align: left; padding-left: 62px; }

/* dialog */
.dialog { position: absolute; left: 0; top: 120px; width: 382px; height: 498px; border: 1px solid #5a6470; border-left: 0; background: #d8e4f0; padding: 0 6px 6px 0; display: flex; flex-direction: column; box-shadow: 0 0 2px #000; }
.titlebar { height: 23px; margin-right: -6px; position: relative; flex: none; display: flex; align-items: center; padding-bottom: 2px; background: linear-gradient(90deg, #e6eef8 0, #cfdcea 100px, #989ca4 120px, #4a4e4c 135px, #3f4342 290px, #8a8e94 305px, #c9d6e6 345px, #d9e6f2 100%); }
.title { margin-left: -7px; font-size: 12px; }
.winclose { position: absolute; right: 4px; top: 3px; width: 18px; height: 18px; border: 1px solid #7a3a30; border-radius: 2px; background: linear-gradient(#e8a090, #c04030 55%, #d86a50); color: #fff; font: bold 14px/15px "Liberation Sans", sans-serif; text-align: center; }
.dialog-body { flex: 1; background: #fff; padding-top: 4px; border: 1px solid #888; border-left: 0; }
.props { width: 372px; }
.p1 { width: 15px; } .p2 { width: 121px; } .p3 { width: 236px; }
.props th { height: 22px; font-weight: normal; font-size: 13px; border: 1px solid #bbb; border-top: 1px solid #ddd; border-left: 0; background: linear-gradient(#fff, #ececec); padding: 0; }
.props td { height: 19px; padding: 0; border: 1px solid #bbb; border-left: 0; white-space: nowrap; overflow: hidden; }
.props td.rn { background: linear-gradient(#fff, #ececec); font: 12px "Liberation Serif", serif; }
.props td.rn.cur { background: #fdd28a; }
.nm { padding-left: 20px !important; }
.val { padding-left: 2px !important; }
.link { color: #0000f0; }
.dim { color: #8a8a8a; }
.active { background: #3f96f0; color: #fff; }
.activeval { background: #ddeeff; }
.plus { display: inline-block; width: 12px; height: 12px; border: 1px solid #999; background: #eee; color: #000; font: 12px/10px "Liberation Mono", monospace; text-align: center; margin: 0 6px 0 -2px; vertical-align: middle; }

/* annotation arrows */
.arrows-layer { position: absolute; left: 0; top: 0; pointer-events: none; }
.arrows-layer polygon { fill: #14dcdc; }
```
